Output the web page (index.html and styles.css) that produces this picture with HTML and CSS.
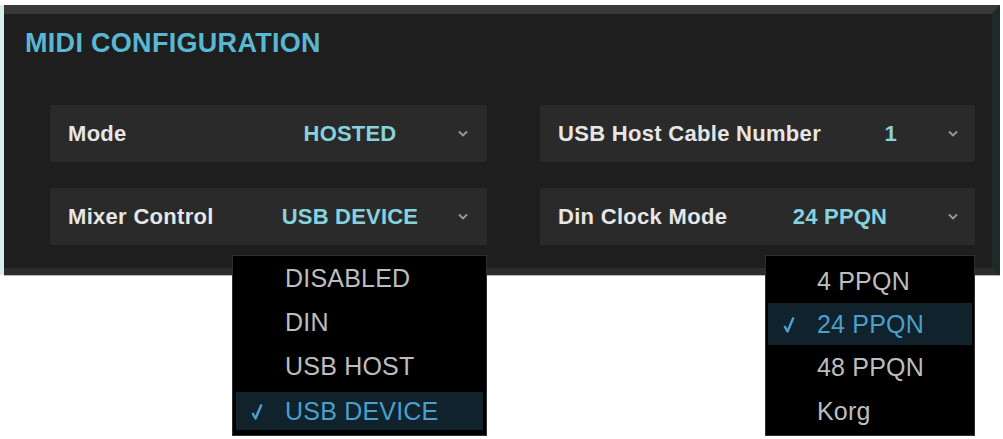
FILE: index.html
```html
<!DOCTYPE html>
<html>
<head>
<meta charset="utf-8">
<link rel="stylesheet" href="styles.css">
</head>
<body>
<div class="stage">
  <section class="panel">
    <h1 class="title">MIDI CONFIGURATION</h1>
    <div class="grid">
      <div class="field">
        <span class="label">Mode</span>
        <span class="value">HOSTED</span>
        <span class="chev"><svg width="10" height="7" viewBox="0 0 10 7"><path d="M1 1.5 L5 5.5 L9 1.5" fill="none" stroke="#9a9a9a" stroke-width="1.8"/></svg></span>
      </div>
      <div class="field">
        <span class="label">USB Host Cable Number</span>
        <span class="value value-num">1</span>
        <span class="chev"><svg width="10" height="7" viewBox="0 0 10 7"><path d="M1 1.5 L5 5.5 L9 1.5" fill="none" stroke="#9a9a9a" stroke-width="1.8"/></svg></span>
      </div>
      <div class="field">
        <span class="label">Mixer Control</span>
        <span class="value">USB DEVICE</span>
        <span class="chev"><svg width="10" height="7" viewBox="0 0 10 7"><path d="M1 1.5 L5 5.5 L9 1.5" fill="none" stroke="#9a9a9a" stroke-width="1.8"/></svg></span>
        <ul class="menu menu-mixer">
          <li class="item"><span class="check"></span>DISABLED</li>
          <li class="item"><span class="check"></span>DIN</li>
          <li class="item"><span class="check"></span>USB HOST</li>
          <li class="item selected"><span class="check"><svg width="12" height="17" viewBox="0 0 12 17"><path d="M1.5 10 L4.5 15.5 L10.5 1.5" fill="none" stroke="#4aa2d0" stroke-width="2.4" stroke-linejoin="round"/></svg></span>USB DEVICE</li>
        </ul>
      </div>
      <div class="field">
        <span class="label">Din Clock Mode</span>
        <span class="value">24 PPQN</span>
        <span class="chev"><svg width="10" height="7" viewBox="0 0 10 7"><path d="M1 1.5 L5 5.5 L9 1.5" fill="none" stroke="#9a9a9a" stroke-width="1.8"/></svg></span>
        <ul class="menu menu-clock">
          <li class="item"><span class="check"></span>4 PPQN</li>
          <li class="item selected"><span class="check"><svg width="12" height="17" viewBox="0 0 12 17"><path d="M1.5 10 L4.5 15.5 L10.5 1.5" fill="none" stroke="#4aa2d0" stroke-width="2.4" stroke-linejoin="round"/></svg></span>24 PPQN</li>
          <li class="item"><span class="check"></span>48 PPQN</li>
          <li class="item"><span class="check"></span>Korg</li>
        </ul>
      </div>
    </div>
  </section>
</div>
</body>
</html>
```

FILE: styles.css
```css
* { box-sizing: border-box; }
html, body { margin: 0; padding: 0; background: #ffffff; }
body { width: 1003px; height: 439px; overflow: hidden; font-family: "Liberation Sans", Arial, sans-serif; }

.stage {
  margin-top: 5px;
  border-left: 4px solid #d6eef0;
  width: 1000px;
}

.panel {
  width: 996px;
  background: #1e1e1e;
  border-top: 9px solid #393939;
  border-bottom: 7px solid #2c2c2c;
  border-right: 8px solid #1c2a29;
  padding: 14px 0 23px 21px;
  box-shadow: 0 1px 0 #b5b5b5;
}

.title {
  margin: 0;
  font-size: 27px;
  line-height: 30px;
  font-weight: 700;
  letter-spacing: 0.3px;
  color: #58b8d4;
}

.grid {
  margin: 47px 0 0 25px;
  display: grid;
  grid-template-columns: 437px 435px;
  grid-auto-rows: 57px;
  column-gap: 53px;
  row-gap: 26px;
}

.field {
  position: relative;
  background: #2a2a2a;
  display: grid;
  grid-template-columns: 182px 200px 26px;
  align-items: center;
  padding-left: 18px;
  border-radius: 2px;
}

.label {
  font-size: 22px;
  font-weight: 700;
  letter-spacing: 0.3px;
  color: #e6e6e6;
  white-space: nowrap;
}

.value {
  font-size: 22px;
  font-weight: 700;
  letter-spacing: 0.2px;
  color: #86d2de;
  text-align: center;
  white-space: nowrap;
}

.value-num { text-align: right; padding-right: 43px; }

.chev { display: flex; justify-content: center; align-items: center; }

.menu {
  position: absolute;
  top: calc(100% + 10px);
  right: 0;
  height: 181px;
  margin: 0;
  list-style: none;
  background: #000;
  border: 1px solid #2e2e2e;
  font-size: 25px;
  letter-spacing: 0.2px;
  color: #bdbdbd;
  z-index: 2;
}

.menu-mixer { width: 255px; padding: 0 3px; }
.menu-clock { width: 210px; padding: 3px 2px 0; }

.item {
  height: 44px;
  display: flex;
  align-items: center;
  padding-left: 15px;
  white-space: nowrap;
}

.menu-mixer .item.selected { height: 38px; margin-top: 4px; }
.menu-clock .item.selected { height: 42px; }

.check {
  width: 34px;
  display: flex;
  align-items: center;
}

.selected {
  background: #10222b;
  color: #4a9fcb;
}
```
